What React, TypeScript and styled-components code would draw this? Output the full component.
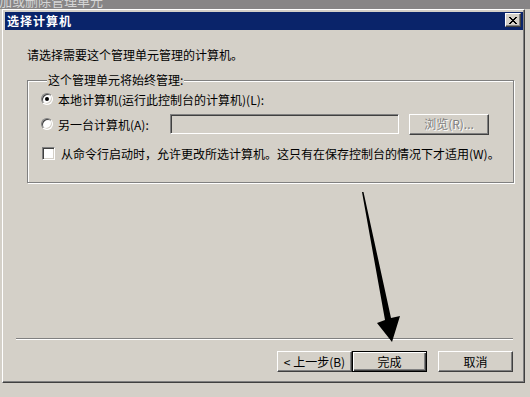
import React from 'react';
import styled, { createGlobalStyle } from 'styled-components';

const GlobalStyle = createGlobalStyle`
  html, body {
    margin: 0;
    padding: 0;
  }
  body {
    background: #d4d0c8;
    font-family: "Noto Sans CJK SC", "Liberation Sans", sans-serif;
    font-size: 12px;
    color: #000;
  }
`;

const Desktop = styled.div`
  position: relative;
  width: 530px;
  height: 397px;
  overflow: hidden;
  background: #d4d0c8;
`;

const BackStrip = styled.div`
  height: 9px;
  background: #878586;
  overflow: hidden;
  white-space: nowrap;
  color: #d6d6d6;
  font-size: 13px;
  line-height: 16px;
`;

const StripText = styled.div`
  margin: -7px 0 0 -14px;
`;

const Dialog = styled.div`
  box-sizing: border-box;
  margin-left: 2px;
  width: 523px;
  height: 374px;
  border-top: 1px solid #fff;
  border-left: 1px solid #fff;
  border-right: 1px solid #404040;
  border-bottom: 1px solid #404040;
  box-shadow: inset -1px -1px 0 #808080;
  padding: 2px 1px 0 2px;
  display: flex;
  flex-direction: column;
  background: #d4d0c8;
`;

const TitleBar = styled.div`
  height: 18px;
  flex: none;
  background: #0a246a;
  display: flex;
  align-items: flex-start;
  justify-content: space-between;
  padding-left: 2px;
`;

const Title = styled.span`
  color: #fff;
  font-weight: bold;
  font-size: 12px;
  line-height: 18px;
  letter-spacing: 1px;
`;

const CloseButton = styled.button`
  box-sizing: border-box;
  width: 16px;
  height: 14px;
  margin: 1px 2px 0 0;
  padding: 0;
  background: #d4d0c8;
  border-top: 1px solid #fff;
  border-left: 1px solid #fff;
  border-right: 1px solid #404040;
  border-bottom: 1px solid #404040;
  box-shadow: inset -1px -1px 0 #808080;
  display: flex;
  align-items: center;
  justify-content: center;
`;

const Body = styled.div`
  flex: 1;
  display: flex;
  flex-direction: column;
  padding: 17px 10px 10px 11px;
`;

const Content = styled.div`
  padding: 0 9px 0 11px;
  display: flex;
  flex-direction: column;
`;

const Text = styled.div`
  line-height: 16px;
  white-space: nowrap;
`;

const Group = styled.fieldset`
  margin: 9px 0 0 0;
  padding: 3px 13px 21px 13px;
  border: 1px solid #808080;
  box-shadow: 1px 1px 0 #fff, inset 1px 1px 0 #fff;
  display: flex;
  flex-direction: column;
  gap: 7px;
`;

const Legend = styled.legend`
  padding: 0 1px;
  margin-left: 6px;
  line-height: 16px;
  background: #d4d0c8;
`;

const Row = styled.div<{ $tall?: boolean; $gap?: number }>`
  display: flex;
  align-items: center;
  height: ${p => (p.$tall ? 20 : 16)}px;
  margin-top: ${p => p.$gap ?? 0}px;
  white-space: nowrap;
`;

const Choice = styled.label<{ $width?: number }>`
  display: flex;
  align-items: center;
  gap: 5px;
  ${p => (p.$width ? `width: ${p.$width}px; flex: none;` : '')}
`;

const Radio = styled.span<{ $checked?: boolean }>`
  box-sizing: border-box;
  width: 12px;
  height: 12px;
  flex: none;
  border-radius: 50%;
  background: #fff;
  border: 1px solid;
  border-color: #808080 #fff #fff #808080;
  box-shadow: inset 1px 1px 0 #404040, inset -1px -1px 0 #d4d0c8;
  display: flex;
  align-items: center;
  justify-content: center;
  &::after {
    content: '';
    width: 4px;
    height: 4px;
    border-radius: 50%;
    background: #000;
    display: ${p => (p.$checked ? 'block' : 'none')};
  }
`;

const Check = styled.span`
  box-sizing: border-box;
  width: 13px;
  height: 13px;
  flex: none;
  margin-left: 1px;
  margin-right: 1px;
  background: #fff;
  border: 1px solid;
  border-color: #808080 #fff #fff #808080;
  box-shadow: inset 1px 1px 0 #404040, inset -1px -1px 0 #d4d0c8;
`;

const TextBox = styled.div`
  box-sizing: border-box;
  width: 229px;
  height: 20px;
  flex: none;
  background: #d4d0c8;
  border: 1px solid;
  border-color: #808080 #fff #fff #808080;
  box-shadow: inset 1px 1px 0 #404040, inset -1px -1px 0 #d4d0c8;
`;

const Button = styled.button<{ $default?: boolean; $disabled?: boolean; $width?: number }>`
  box-sizing: border-box;
  width: ${p => p.$width ?? 75}px;
  height: 21px;
  flex: none;
  padding: 0;
  font-family: inherit;
  font-size: 12px;
  line-height: 16px;
  background: #d4d0c8;
  color: ${p => (p.$disabled ? '#808080' : '#000')};
  text-shadow: ${p => (p.$disabled ? '1px 1px 0 #fff' : 'none')};
  ${p =>
    p.$default
      ? `
    border: 1px solid #000;
    box-shadow: inset 1px 1px 0 #fff, inset -1px -1px 0 #404040, inset -2px -2px 0 #808080;
  `
      : `
    border-top: 1px solid #fff;
    border-left: 1px solid #fff;
    border-right: 1px solid #404040;
    border-bottom: 1px solid #404040;
    box-shadow: inset -1px -1px 0 #808080;
  `}
`;

const Spacer = styled.div`
  flex: 1;
`;

const Separator = styled.div`
  height: 1px;
  background: #808080;
  border-bottom: 1px solid #fff;
  flex: none;
`;

const ButtonRow = styled.div`
  display: flex;
  justify-content: flex-end;
  margin-top: 11px;
`;

const ButtonGap = styled.div<{ $width?: number }>`
  width: ${p => p.$width ?? 11}px;
  flex: none;
`;

const Overlay = styled.svg`
  position: absolute;
  left: 0;
  top: 0;
  pointer-events: none;
`;

export default function App() {
  return (
    <Desktop>
      <GlobalStyle />
      <BackStrip>
        <StripText>添加或删除管理单元</StripText>
      </BackStrip>
      <Dialog>
        <TitleBar>
          <Title>选择计算机</Title>
          <CloseButton aria-label="关闭">
            <svg width="8" height="7" viewBox="0 0 8 7" shapeRendering="crispEdges">
              <path d="M0 0h2v1H0zM6 0h2v1H6zM1 1h2v1H1zM5 1h2v1H5zM2 2h4v1H2zM3 3h2v1H3zM2 4h4v1H2zM1 5h2v1H1zM5 5h2v1H5zM0 6h2v1H0zM6 6h2v1H6z" fill="#000" />
            </svg>
          </CloseButton>
        </TitleBar>
        <Body>
          <Content>
            <Text>请选择需要这个管理单元管理的计算机。</Text>
            <Group>
              <Legend>这个管理单元将始终管理:</Legend>
              <Row>
                <Choice>
                  <Radio $checked />
                  本地计算机(运行此控制台的计算机)(L):
                </Choice>
              </Row>
              <Row $tall>
                <Choice $width={129}>
                  <Radio />
                  另一台计算机(A):
                </Choice>
                <TextBox />
                <ButtonGap $width={10} />
                <Button $disabled $width={80}>浏览(R)...</Button>
              </Row>
              <Row $gap={4}>
                <Choice>
                  <Check />
                  从命令行启动时，允许更改所选计算机。这只有在保存控制台的情况下才适用(W)。
                </Choice>
              </Row>
            </Group>
          </Content>
          <Spacer />
          <Separator />
          <ButtonRow>
            <Button>&lt; 上一步(B)</Button>
            <Button $default>完成</Button>
            <ButtonGap />
            <Button>取消</Button>
          </ButtonRow>
        </Body>
      </Dialog>
      <Overlay width="530" height="397" viewBox="0 0 530 397">
        <polygon
          points="362,192 363.5,192 391,318 400,316 392,342 377,323 385,320"
          fill="#000"
        />
      </Overlay>
    </Desktop>
  );
}
